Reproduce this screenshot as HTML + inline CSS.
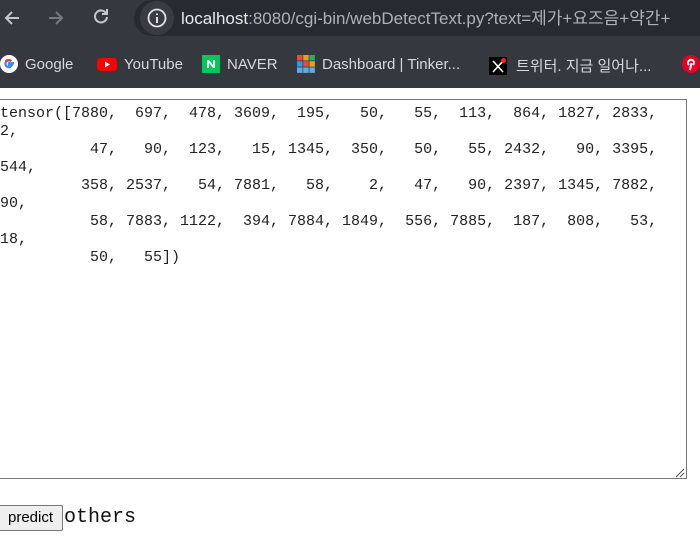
<!DOCTYPE html>
<html><head><meta charset="utf-8"><style>
*{margin:0;padding:0;box-sizing:border-box}
body{width:700px;height:543px;overflow:hidden;background:#fff;position:relative;font-family:"Liberation Sans","Noto Sans CJK KR",sans-serif}
.top{position:absolute;left:0;top:0;width:700px;height:88px;background:#363840}
.omni{position:absolute;left:134px;top:0;width:600px;height:36px;border-radius:18px;background:#282a31}
.url{position:absolute;left:181px;top:4px;font-size:17px;color:#e8eaed;white-space:nowrap}
.url span{color:#aeb1b7}
.bm{position:absolute;top:55px;font-size:15px;color:#d6d8dc;white-space:nowrap;display:flex;align-items:center}
.ic{display:inline-block;width:18px;height:18px;margin-right:7px}
pre{position:absolute;left:0;top:105px;font-family:"Liberation Mono","Noto Sans CJK KR",monospace;font-size:15px;line-height:18px;color:#222;letter-spacing:0}
.ta{position:absolute;left:-5px;top:99px;width:692px;height:380px;border:1px solid #767676}
.btn{position:absolute;left:-2px;top:505px;width:65px;height:26px;background:#efefef;border:1px solid #767676;border-radius:2px;font-size:15px;text-align:center;line-height:24px;color:#000}
.oth{position:absolute;left:64px;top:506px;font-family:"Liberation Mono",monospace;font-size:20px;color:#111}
</style></head><body>
<div class="top">
 <svg style="position:absolute;left:2px;top:8px" width="20" height="20" viewBox="0 0 20 20"><path d="M17 10H4M10 4L4 10L10 16" stroke="#c4c7cc" stroke-width="2" fill="none"/></svg>
 <svg style="position:absolute;left:46px;top:8px" width="20" height="20" viewBox="0 0 20 20"><path d="M3 10H16M10 4L16 10L10 16" stroke="#777a80" stroke-width="2" fill="none"/></svg>
 <svg style="position:absolute;left:91px;top:6px" width="20" height="20" viewBox="0 0 20 20"><path d="M15.5 8A6 6 0 1 0 16 11" stroke="#c4c7cc" stroke-width="2" fill="none"/><path d="M16 3V8H11" stroke="#c4c7cc" stroke-width="2" fill="none"/></svg>
 <div class="omni"></div>
 <div style="position:absolute;left:140px;top:1px;width:34px;height:34px;border-radius:50%;background:#3a3c43"></div>
 <svg style="position:absolute;left:146px;top:7px" width="22" height="22" viewBox="0 0 22 22"><circle cx="11" cy="11" r="8.5" stroke="#e0e2e6" stroke-width="1.8" fill="none"/><path d="M11 10V16M11 6.5V8" stroke="#e0e2e6" stroke-width="2"/></svg>
 <div class="url">localhost<span>:8080/cgi-bin/webDetectText.py?text=제가+요즈음+약간+</span></div>
 <div class="bm" style="left:0"><svg class="ic" viewBox="0 0 18 18"><circle cx="9" cy="9" r="9" fill="#fff"/><path d="M14 8.2H9V10H12A3.4 3.4 0 1 1 11.2 6.3" stroke="#4285f4" stroke-width="2.2" fill="none"/><path d="M5.7 6.5A3.4 3.4 0 0 1 11.2 6.3" stroke="#ea4335" stroke-width="2.2" fill="none"/></svg>Google</div>
 <div class="bm" style="left:97px"><svg class="ic" style="width:20px" viewBox="0 0 20 18"><rect x="0" y="3" width="20" height="13" rx="3.5" fill="#f00"/><path d="M8 6.5V12.5L13 9.5Z" fill="#fff"/></svg>YouTube</div>
 <div class="bm" style="left:202px"><svg class="ic" viewBox="0 0 18 18"><rect width="18" height="18" fill="#03c75a"/><path d="M5 13V5H7L11 10V5H13V13H11L7 8V13Z" fill="#fff"/></svg>NAVER</div>
 <div class="bm" style="left:297px"><svg class="ic" viewBox="0 0 18 18"><rect x="0" y="0" width="5.5" height="5.5" fill="#e74c3c"/><rect x="6.2" y="0" width="5.5" height="5.5" fill="#f39c12"/><rect x="12.4" y="0" width="5.5" height="5.5" fill="#27ae60"/><rect x="0" y="6.2" width="5.5" height="5.5" fill="#3498db"/><rect x="6.2" y="6.2" width="5.5" height="5.5" fill="#e74c3c"/><rect x="12.4" y="6.2" width="5.5" height="5.5" fill="#f39c12"/><rect x="0" y="12.4" width="5.5" height="5.5" fill="#5dade2"/><rect x="6.2" y="12.4" width="5.5" height="5.5" fill="#5dade2"/><rect x="12.4" y="12.4" width="5.5" height="5.5" fill="#5dade2"/></svg>Dashboard | Tinker...</div>
 <div class="bm" style="left:489px"><svg class="ic" style="margin-right:9px" viewBox="0 0 18 18"><rect width="18" height="18" fill="#000"/><path d="M4 4L14 15M14 4L4 15" stroke="#fff" stroke-width="1.6"/><circle cx="14.5" cy="3.5" r="2.5" fill="#f22"/></svg>트위터. 지금 일어나...</div>
 <div class="bm" style="left:682px"><svg class="ic" viewBox="0 0 18 18"><circle cx="9" cy="9" r="9" fill="#e60023"/><path d="M8 15L9.5 8M7 10A3 3 0 1 1 11 10" stroke="#fff" stroke-width="2" fill="none"/></svg></div>
</div>
<div class="ta"></div>
<svg style="position:absolute;left:673px;top:466px" width="12" height="12" viewBox="0 0 12 12"><path d="M11 3L3 11M11 7L7 11" stroke="#555" stroke-width="1"/></svg>
<pre>tensor([7880,  697,  478, 3609,  195,   50,   55,  113,  864, 1827, 2833,
2,
          47,   90,  123,   15, 1345,  350,   50,   55, 2432,   90, 3395,
544,
         358, 2537,   54, 7881,   58,    2,   47,   90, 2397, 1345, 7882,
90,
          58, 7883, 1122,  394, 7884, 1849,  556, 7885,  187,  808,   53,
18,
          50,   55])</pre>
<div class="btn">predict</div>
<div class="oth">others</div>
</body></html>
